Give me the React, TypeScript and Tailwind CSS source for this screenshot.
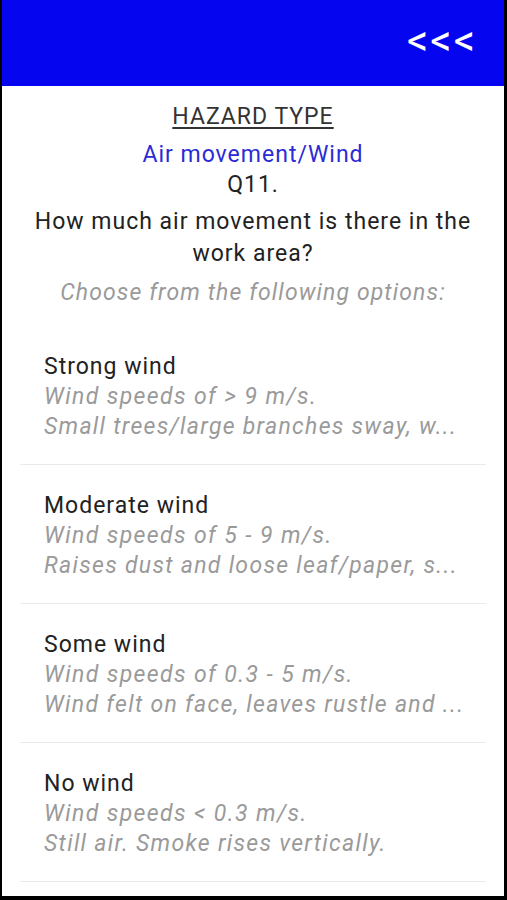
import React from "react";

const items = [
  { title: "Strong wind", l1: "Wind speeds of > 9 m/s.", l2: "Small trees/large branches sway, w..." },
  { title: "Moderate wind", l1: "Wind speeds of 5 - 9 m/s.", l2: "Raises dust and loose leaf/paper, s..." },
  { title: "Some wind", l1: "Wind speeds of 0.3 - 5 m/s.", l2: "Wind felt on face, leaves rustle and ..." },
  { title: "No wind", l1: "Wind speeds < 0.3 m/s.", l2: "Still air. Smoke rises vertically." },
];

export default function App() {
  return (
    <div className="w-[507px] h-[900px] bg-black pl-[2px] pr-[3px] pb-[4px] overflow-hidden" style={{ fontFamily: "Roboto, 'Noto Sans', sans-serif" }}>
      <div className="h-full bg-white flex flex-col">
        <div className="h-[86px] bg-[#0505f0] flex items-start justify-end pr-[27px] pt-[17px]">
          <span className="text-white text-[42px] leading-[48px] font-normal tracking-[2px]">&lt;&lt;&lt;</span>
        </div>
        <div className="flex flex-col items-center text-center tracking-[1px]">
          <div className="mt-[16px] h-[30px] leading-[30px] text-[23px] text-[#333] underline underline-offset-[3px]">HAZARD TYPE</div>
          <div className="mt-[8px] h-[30px] leading-[30px] text-[23px] text-[#2b2bd6]">Air movement/Wind</div>
          <div className="h-[30px] leading-[30px] text-[23px] text-[#222]">Q11.</div>
          <div className="mt-[6px] leading-[32px] text-[23px] text-[#222] px-[8px]">How much air movement is there in the<br />work area?</div>
          <div className="mt-[8px] h-[30px] leading-[30px] text-[23px] italic text-[#9a9a9a] tracking-[1.1px]">Choose from the following options:</div>
        </div>
        <div className="mt-[18px] px-[18px]">
          {items.map((it) => (
            <div key={it.title} className="border-b border-[#eaeaea] pt-[26px] pb-[22px] px-[24px] whitespace-nowrap">
              <div className="h-[30px] leading-[30px] text-[23px] text-[#222] tracking-[1px]">{it.title}</div>
              <div className="h-[30px] leading-[30px] text-[23px] italic text-[#9a9a9a] tracking-[1.4px]">{it.l1}</div>
              <div className="h-[30px] leading-[30px] text-[23px] italic text-[#9a9a9a] tracking-[1.3px]">{it.l2}</div>
            </div>
          ))}
        </div>
      </div>
    </div>
  );
}
